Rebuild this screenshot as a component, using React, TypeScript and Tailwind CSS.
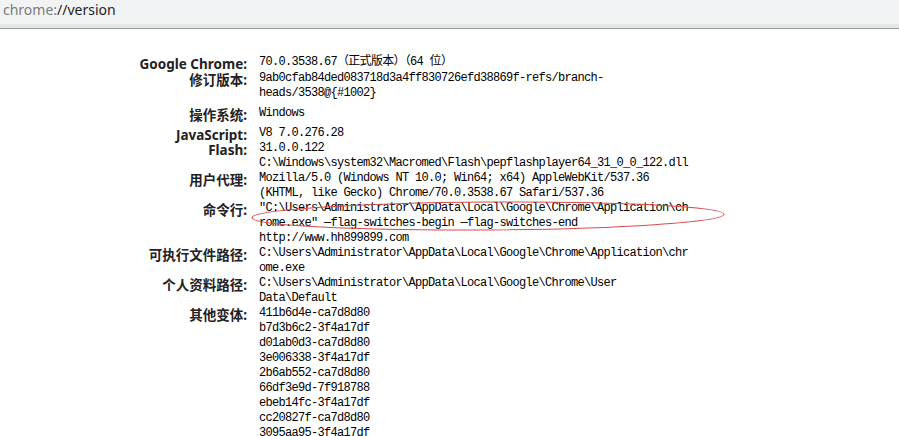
import React from "react";

type Row = { label: string; lines: string[]; mt: string; nowrap?: boolean };

const rows: Row[] = [
  { label: "Google Chrome:", lines: ["70.0.3538.67（正式版本）（64 位）"], mt: "" },
  {
    label: "修订版本:",
    lines: ["9ab0cfab84ded083718d3a4ff830726efd38869f-refs/branch-heads/3538@{#1002}"],
    mt: "mt-px",
  },
  { label: "操作系统:", lines: ["Windows"], mt: "mt-[5px]" },
  { label: "JavaScript:", lines: ["V8 7.0.276.28"], mt: "mt-[5px]" },
  {
    label: "Flash:",
    lines: ["31.0.0.122", "C:\\Windows\\system32\\Macromed\\Flash\\pepflashplayer64_31_0_0_122.dll"],
    mt: "",
    nowrap: true,
  },
  {
    label: "用户代理:",
    lines: ["Mozilla/5.0 (Windows NT 10.0; Win64; x64) AppleWebKit/537.36 (KHTML, like Gecko) Chrome/70.0.3538.67 Safari/537.36"],
    mt: "",
  },
  {
    label: "命令行:",
    lines: [
      '"C:\\Users\\Administrator\\AppData\\Local\\Google\\Chrome\\Application\\chrome.exe" —flag-switches-begin —flag-switches-end',
      "http://www.hh899899.com",
    ],
    mt: "",
  },
  {
    label: "可执行文件路径:",
    lines: ["C:\\Users\\Administrator\\AppData\\Local\\Google\\Chrome\\Application\\chrome.exe"],
    mt: "",
  },
  {
    label: "个人资料路径:",
    lines: ["C:\\Users\\Administrator\\AppData\\Local\\Google\\Chrome\\User Data\\Default"],
    mt: "",
  },
  {
    label: "其他变体:",
    lines: [
      "411b6d4e-ca7d8d80",
      "b7d3b6c2-3f4a17df",
      "d01ab0d3-ca7d8d80",
      "3e006338-3f4a17df",
      "2b6ab552-ca7d8d80",
      "66df3e9d-7f918788",
      "ebeb14fc-3f4a17df",
      "cc20827f-ca7d8d80",
      "3095aa95-3f4a17df",
    ],
    mt: "",
  },
];

export default function App() {
  return (
    <div className="relative w-[899px] h-[436px] overflow-hidden bg-white">
      <div className="h-[24px] bg-[#f2f3f4] pl-[3px] pt-[2px]">
        <span className="block text-[14px] leading-[16px] font-['Noto_Sans','Liberation_Sans',sans-serif]">
          <span className="text-[#7b7b7b]">chrome:</span>
          <span className="text-[#1e1e1e]">//version</span>
        </span>
      </div>
      <div className="h-[4px] bg-[#e6e7e7]" />
      <div className="h-px bg-[#9e9f9f]" />

      <div className="pt-[26px] flex flex-col">
        {rows.map((r) => (
          <div key={r.label} className={`flex items-start ${r.mt}`}>
            <div className="w-[247px] shrink-0 text-right translate-y-[2px] text-[13.5px] leading-[15px] font-bold text-[#222] font-['Noto_Sans','Noto_Sans_CJK_SC',sans-serif]">
              {r.label}
            </div>
            <div className="ml-[12px] w-[432px] text-[12px] leading-[15px] tracking-[-0.7px] text-black font-['Liberation_Mono','Noto_Sans_CJK_SC',monospace] [overflow-wrap:anywhere]">
              {r.lines.map((l, i) => (
                <div key={i} className={r.nowrap ? "whitespace-nowrap" : ""}>
                  {l}
                </div>
              ))}
            </div>
          </div>
        ))}
      </div>

      <svg
        className="absolute left-[248px] top-[200px] w-[480px] h-[34px] pointer-events-none"
        viewBox="0 0 480 34"
      >
        <ellipse
          cx="240"
          cy="16"
          rx="236"
          ry="14"
          fill="none"
          stroke="#d94a4a"
          strokeWidth="1"
          transform="rotate(-0.4 240 16)"
        />
      </svg>
    </div>
  );
}
